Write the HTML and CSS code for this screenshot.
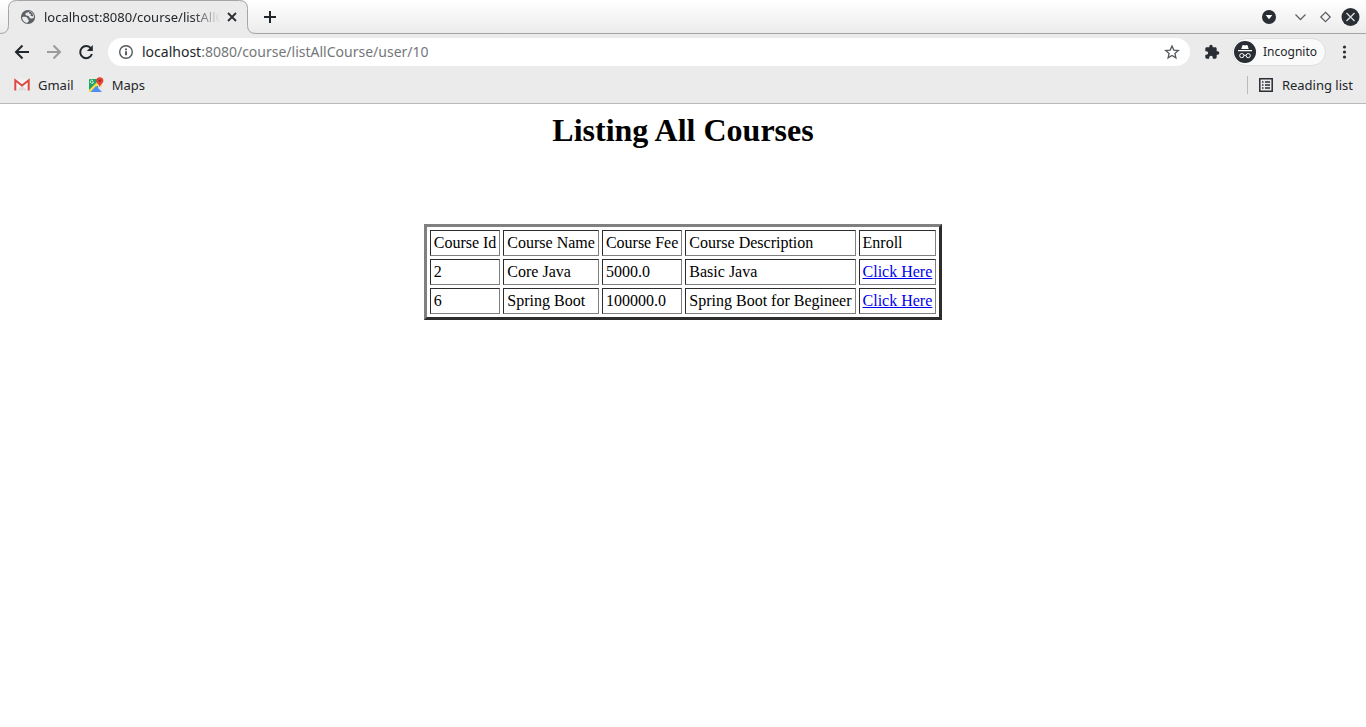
FILE: index.html
```html
<!DOCTYPE html>
<html lang="en">
<head>
<meta charset="utf-8">
<title>Listing All Courses</title>
<link rel="stylesheet" href="styles.css">
</head>
<body>
<header class="browser">
  <div class="tab-strip">
    <div class="tab">
      <svg class="tab-shape" width="256" height="34" viewBox="0 0 256 34" aria-hidden="true"><path d="M0 34v-.5Q8.500 33.500 8.500 25.500V8.500Q8.500.5 16.500.5H239.500Q247.500.5 247.500 8.500V25.500Q247.500 33.500 256 33.500V34Z" fill="#ebebeb"/><path d="M0 33.500Q8.500 33.500 8.500 25.500V8.500Q8.500.5 16.500.5H239.500Q247.500.5 247.500 8.500V25.500Q247.500 33.500 256 33.500" fill="none" stroke="#a5a5a5"/></svg>
      <svg class="icon" width="16" height="16" viewBox="0 0 16 16" aria-hidden="true"><circle cx="8" cy="8" r="7.100" fill="#5b6065"/><path d="M9.500 2.300C8.500 4 5.500 3.300 5.400 5.300S8.800 6.200 9.300 8s2.600 1.900 4.600.8C14.300 5.500 12.500 3 9.500 2.300Z" fill="#ebebeb"/><path d="M9.500 2.300 8.800 4.500 11 5l-.5 1.800 2.700.6C13.300 5 11.500 3 9.500 2.300Z" fill="#5b6065"/><path d="M2.200 8c2-.6 5.300-.3 5.500 1.500.1 1.300 1.300 1 1.200 2.300-.1 1-1.300.8-1.600 2.200C4.300 13.700 2 11 2.200 8Z" fill="#ebebeb"/></svg>
      <span class="tab-title">localhost:8080/course/listAllC</span>
      <button class="btn tab-close" aria-label="Close tab"><svg width="16" height="16" viewBox="0 0 16 16"><path d="m4 4 8 8m0-8-8 8" stroke="#2a2e32" stroke-width="1.800"/></svg></button>
    </div>
    <button class="btn new-tab" aria-label="New tab"><svg width="16" height="16" viewBox="0 0 16 16"><path d="M8 2v12M2 8h12" stroke="#20262c" stroke-width="2"/></svg></button>
    <div class="window-buttons">
      <button class="btn" aria-label="Search tabs"><svg width="16" height="16" viewBox="0 0 16 16"><circle cx="8" cy="8" r="7" fill="#282e34"/><path d="M4.700 6h6.600L8 10.200Z" fill="#fff"/></svg></button>
      <div class="frame-buttons">
        <button class="btn" aria-label="Minimize"><svg width="20" height="20" viewBox="0 0 20 20"><path d="m4.500 7.500 5 5 5-5" fill="none" stroke="#606468" stroke-width="1.300"/></svg></button>
        <button class="btn" aria-label="Maximize"><svg width="20" height="20" viewBox="0 0 20 20"><path d="m9.500 5.300 4.700 4.700-4.700 4.700L4.800 10Z" fill="none" stroke="#606468" stroke-width="1.300"/></svg></button>
        <button class="btn" aria-label="Close window"><svg width="20" height="20" viewBox="0 0 20 20"><circle cx="9.500" cy="10" r="9" fill="#282e34"/><path d="m5.500 6 8 8m0-8-8 8" stroke="#e0e0e0" stroke-width="1.300"/></svg></button>
      </div>
    </div>
  </div>

  <div class="toolbar">
    <nav class="history">
      <button class="btn" aria-label="Back"><svg width="16" height="16" viewBox="0 0 16 16"><path d="M15 8H2m6.500-6.500L2 8l6.500 6.500" fill="none" stroke="#22272c" stroke-width="2"/></svg></button>
      <button class="btn" aria-label="Forward"><svg width="16" height="16" viewBox="0 0 16 16"><path d="M1 8h13M7.500 1.500 14 8l-6.500 6.500" fill="none" stroke="#999b9d" stroke-width="2"/></svg></button>
      <button class="btn" aria-label="Reload"><svg width="16" height="16" viewBox="0 0 16 16"><path d="M13 4.500A6 6 0 1 0 13.900 10" fill="none" stroke="#22272c" stroke-width="2"/><path d="M14.800 1v6H8.800Z" fill="#22272c"/></svg></button>
    </nav>
    <div class="omnibox">
      <svg class="icon" width="16" height="16" viewBox="0 0 16 16" aria-hidden="true"><circle cx="8" cy="8" r="6.300" fill="none" stroke="#53585c" stroke-width="1.400"/><path d="M7.200 7.200h1.600v4H7.200ZM7.200 4.600h1.600v1.600H7.200Z" fill="#33383c"/></svg>
      <span class="url"><span class="host">localhost</span>:8080/course/listAllCourse/user/10</span>
      <button class="btn" aria-label="Bookmark this page"><svg width="16" height="16" viewBox="0 0 16 16"><path d="m8 2 1.800 4.100 4.500.4-3.400 2.900 1 4.400L8 11.500l-3.900 2.300 1-4.400-3.400-2.900 4.500-.4Z" fill="none" stroke="#53585c" stroke-width="1.300"/></svg></button>
    </div>
    <button class="btn extensions" aria-label="Extensions"><svg width="16" height="16" viewBox="0 0 24 24"><path d="M20.500 11H19V7c0-1.100-.9-2-2-2h-4V3.500a2.500 2.500 0 0 0-5 0V5H4c-1.100 0-2 .9-2 2v3.800h1.500a2.700 2.700 0 0 1 0 5.400H2V20c0 1.100.9 2 2 2h3.800v-1.500a2.700 2.700 0 0 1 5.400 0V22H17c1.100 0 2-.9 2-2v-4h1.500a2.500 2.500 0 0 0 0-5Z" fill="#282e34"/></svg></button>
    <button class="btn incognito"><svg width="22" height="22" viewBox="0 0 22 22" aria-hidden="true"><circle cx="11" cy="11" r="11" fill="#282e34"/><path d="M7.300 8 8.400 4.600q.2-.7.900-.5l1.700.5 1.700-.5q.7-.2.900.5L14.700 8ZM4 9.100h14v1.200H4Z" fill="#fff"/><g fill="none" stroke="#fff" stroke-width="1"><circle cx="7.800" cy="14.600" r="2.100"/><circle cx="14.200" cy="14.600" r="2.100"/><path d="M9.900 14.500q1.100-.8 2.200 0"/></g></svg><span>Incognito</span></button>
    <button class="btn" aria-label="Menu"><svg width="16" height="16" viewBox="0 0 16 16"><g fill="#282e34"><circle cx="8.500" cy="3" r="1.600"/><circle cx="8.500" cy="8" r="1.600"/><circle cx="8.500" cy="13" r="1.600"/></g></svg></button>
  </div>

  <div class="bookmarks">
    <a class="bookmark" href="#gmail"><svg width="16" height="16" viewBox="0 0 16 16" aria-hidden="true"><path d="M1 2.500h14v11H1Z" fill="#f3f3f3"/><path d="m3 13.500 5-5 5 5Z" fill="#dcdcdc"/><path d="M1.300 13.500V3.200L8 8.500l6.700-5.300v10.300" fill="none" stroke="#dc4a40" stroke-width="2"/></svg>Gmail</a>
    <a class="bookmark" href="#maps"><svg width="16" height="16" viewBox="0 0 16 16" aria-hidden="true"><path d="M2 2h11v6L5 14.500H1V3q0-1 1-1Z" fill="#1da362"/><path d="M1 13 10 4l4 4v2L10 8.500 3.500 15H2q-1 0-1-1Z" fill="#fddc4b"/><path d="m8 9 6 6H2.500Z" fill="#4d8df5"/><path d="m9 8 1.500-1L14 11v3Z" fill="#e2e4e6"/><path d="M5.600 5H4.200M5.500 5a1.600 1.600 0 1 1-.5-1.400" fill="none" stroke="#fff" stroke-width=".8"/><path d="M11.800 10.500C11.500 7.500 8.200 6.500 8.200 3.800a3.600 3.600 0 0 1 7.200 0c0 2.700-3.300 3.700-3.600 6.700Z" fill="#e44336"/><circle cx="11.800" cy="3.700" r="1.100" fill="#8c2720"/></svg>Maps</a>
    <button class="btn reading-list"><svg width="16" height="16" viewBox="0 0 16 16" aria-hidden="true"><path d="M1.800 1.800h12.400v12.400H1.800Z" fill="none" stroke="#282e34" stroke-width="1.500"/><path d="M4 5h1.500M4 8h1.500M4 11h1.500M7 5h5M7 8h5M7 11h5" stroke="#282e34" stroke-width="1.400"/></svg>Reading list</button>
  </div>
</header>

<main class="page">
  <h1 class="page-title">Listing All Courses</h1>
  <table class="courses">
    <tbody>
      <tr><td>Course Id</td><td>Course Name</td><td>Course Fee</td><td>Course Description</td><td>Enroll</td></tr>
      <tr><td>2</td><td>Core Java</td><td>5000.0</td><td>Basic Java</td><td><a href="#enroll-2">Click Here</a></td></tr>
      <tr><td>6</td><td>Spring Boot</td><td>100000.0</td><td>Spring Boot for Begineer</td><td><a href="#enroll-6">Click Here</a></td></tr>
    </tbody>
  </table>
</main>
</body>
</html>
```
FILE: styles.css
```css
* { box-sizing: border-box; }

body {
  margin: 0;
  background: #fff;
}

svg { display: block; flex: none; }

.browser {
  background: #ebebeb;
  border-bottom: 1px solid #b9b9b9;
  color: #232629;
  font: 13px/18px "Noto Sans", sans-serif;
}

.btn {
  display: flex;
  align-items: center;
  padding: 0;
  border: 0;
  background: none;
  color: inherit;
  font: inherit;
}

/* Tab strip */
.tab-strip {
  display: flex;
  align-items: center;
  height: 34px;
  padding-right: 5px;
  background: linear-gradient(#fff, #ebebeb);
  box-shadow: inset 0 -1px #a5a5a5;
}

.tab {
  position: relative;
  display: flex;
  align-items: center;
  width: 256px;
  height: 34px;
  padding: 0 16px 0 20px;
}

.tab > * { position: relative; }

.tab > .tab-shape {
  position: absolute;
  top: 0;
  left: 0;
}

.tab-title {
  flex: 1;
  min-width: 0;
  margin-left: 8px;
  white-space: nowrap;
  -webkit-mask-image: linear-gradient(to left, transparent, #000 28px);
  mask-image: linear-gradient(to left, transparent, #000 28px);
}

.tab-close { margin-left: 4px; }
.new-tab { margin-left: 6px; }

.window-buttons {
  display: flex;
  align-items: center;
  gap: 14px;
  margin-left: auto;
}

.frame-buttons { display: flex; gap: 5px; }

/* Toolbar */
.toolbar {
  display: flex;
  align-items: center;
  height: 36px;
  padding: 0 14px;
}

.history { display: flex; gap: 16px; }

.omnibox {
  display: flex;
  flex: 1;
  align-items: center;
  gap: 8px;
  height: 28px;
  margin-left: 14px;
  padding: 0 10px;
  border-radius: 14px;
  background: #fff;
}

.url {
  flex: 1;
  color: #74777a;
  font-size: 14px;
}

.host { color: #232629; }
.extensions { margin: 0 12px 0 14px; }

.incognito {
  gap: 7px;
  height: 28px;
  margin-right: 10px;
  padding: 0 8px 0 1px;
  border: 1px solid #dedede;
  border-radius: 14px;
  background: #fafafa;
  font-size: 12px;
}

/* Bookmarks bar */
.bookmarks {
  display: flex;
  align-items: center;
  gap: 14px;
  height: 33px;
  padding: 0 13px 4px 14px;
}

.bookmark {
  display: flex;
  align-items: center;
  gap: 8px;
  color: inherit;
  text-decoration: none;
}

.reading-list {
  gap: 8px;
  margin-left: auto;
  padding-left: 10px;
  border-left: 1px solid #b9b9b9;
}

/* Page */
.page {
  padding: 8px;
  color: #000;
  font: 16px/18px "Liberation Serif", "Times New Roman", serif;
}

.page-title {
  margin: 0 0 75px;
  font-size: 32px;
  line-height: 37px;
  text-align: center;
}

.courses {
  margin: 0 auto;
  border: 3px solid;
  border-color: #808080 #2c2c2c #2c2c2c #808080;
  border-spacing: 3px;
}

.courses td {
  padding: 3px;
  border: 1px solid;
  border-color: #2c2c2c #808080 #808080 #2c2c2c;
}

.courses a { color: #00e; }
```
